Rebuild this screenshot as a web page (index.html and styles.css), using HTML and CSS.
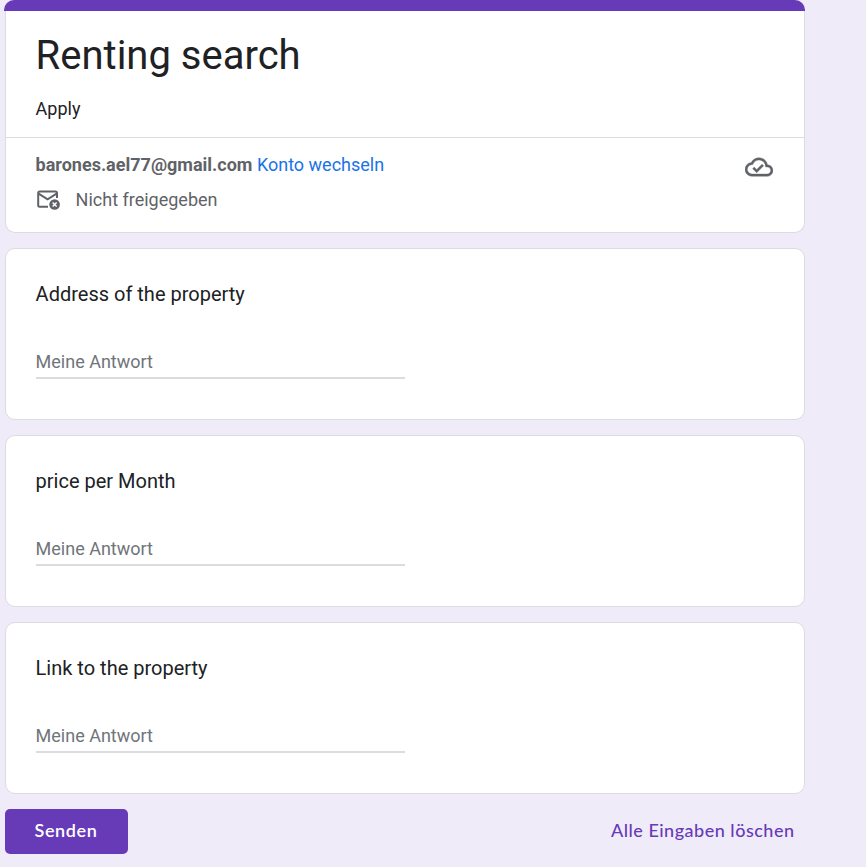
FILE: index.html
```html
<!DOCTYPE html>
<html lang="de">
<head>
<meta charset="utf-8">
<title>Renting search</title>
<link rel="stylesheet" href="styles.css">
</head>
<body>
<form class="form">
  <section class="card header">
    <div class="accent"></div>
    <div class="intro">
      <h1>Renting search</h1>
      <p class="description">Apply</p>
    </div>
    <div class="account">
      <div class="account-text">
        <p class="user"><strong>barones.ael77@gmail.com</strong> <a>Konto wechseln</a></p>
        <p class="shared">
          <svg class="mail" viewBox="0 0 24 20" width="24" height="20"><path d="M11 16.8H2.7Q1.2 16.8 1.2 15.3V3Q1.2 1.5 2.7 1.5H18.5Q20 1.5 20 3V8M1.6 3.7L10.6 9.3L19.6 3.7" fill="none" stroke="#5f6368" stroke-width="2"/><circle cx="17.6" cy="14.5" r="5.3" fill="#5f6368"/><path d="M15.6 12.5l4 4m0-4l-4 4" stroke="#fff" stroke-width="1.5"/></svg>
          <span>Nicht freigegeben</span>
        </p>
      </div>
      <svg class="cloud" viewBox="0 0 24 24" width="28" height="28"><path fill="#5f6368" stroke="#5f6368" stroke-width=".3" d="M19.35 10.04A7.49 7.49 0 0 0 12 4C9.11 4 6.6 5.64 5.35 8.04A5.994 5.994 0 0 0 0 14c0 3.31 2.69 6 6 6h13c2.76 0 5-2.24 5-5 0-2.64-2.05-4.78-4.65-4.96zM19 18H6c-2.21 0-4-1.79-4-4 0-2.05 1.53-3.76 3.56-3.97l1.07-.11.5-.95A5.469 5.469 0 0 1 12 6c2.62 0 4.88 1.86 5.39 4.43l.3 1.5 1.53.11A2.98 2.98 0 0 1 22 15c0 1.65-1.35 3-3 3zm-9-3.82l-2.09-2.09L6.5 13.5 10 17l6.01-6.01-1.41-1.41z"/></svg>
    </div>
  </section>
  <section class="card question"><h2>Address of the property</h2><div class="answer">Meine Antwort</div></section>
  <section class="card question"><h2>price per Month</h2><div class="answer">Meine Antwort</div></section>
  <section class="card question"><h2>Link to the property</h2><div class="answer">Meine Antwort</div></section>
  <footer class="actions"><button type="button" class="submit">Senden</button><a class="clear">Alle Eingaben löschen</a></footer>
</form>
</body>
</html>
```
FILE: styles.css
```css
* { box-sizing: border-box; }
body { margin: 0; background: #f0ebf8; font-family: Roboto, sans-serif; color: #202124; overflow: hidden; }
h1, h2, p { margin: 0; font-weight: 400; }
.form { width: 800px; margin-left: 5px; }
.card { background: #fff; border: 1px solid #dadce0; border-radius: 10px; margin-bottom: 15px; }
.header { height: 233px; border-top: 0; }
.accent { height: 11px; margin: 0 -1px 0 -2px; background: #673ab7; border-radius: 10px 10px 0 0; }
.intro { height: 127px; padding: 20px 30px 0 29.6px; border-bottom: 1px solid #dadce0; }
h1 { font-size: 40px; line-height: 50px; }
.description { font-size: 18px; line-height: 24px; margin-top: 16px; }
.account { display: flex; justify-content: space-between; padding: 15px 31px 0 29.6px; font-size: 18px; line-height: 24px; color: #5f6368; }
.user a { color: #1a73e8; }
.shared { display: flex; align-items: center; gap: 16px; margin-top: 11px; }
.mail { margin-left: 1.4px; margin-right: -1.4px; }
.question { height: 172px; padding: 32px 30px 0 29.6px; }
h2 { font-size: 20px; line-height: 27px; }
.answer { width: 369px; height: 36px; margin-top: 35px; padding-top: 7px; border-bottom: 2px solid #dadce0; color: #70757a; font-size: 18px; line-height: 24px; }
.actions { display: flex; justify-content: space-between; align-items: center; height: 45px; }
.submit { width: 123px; height: 45px; padding: 0 1px 4px 0; border: 0; border-radius: 5px; background: #673ab7; color: #fff; }
.submit, .clear { font: 600 18px Lato, sans-serif; letter-spacing: .6px; }
.clear { color: #673ab7; margin: 0 10.5px 3px 0; font-weight: 500; letter-spacing: .5px; }
```
